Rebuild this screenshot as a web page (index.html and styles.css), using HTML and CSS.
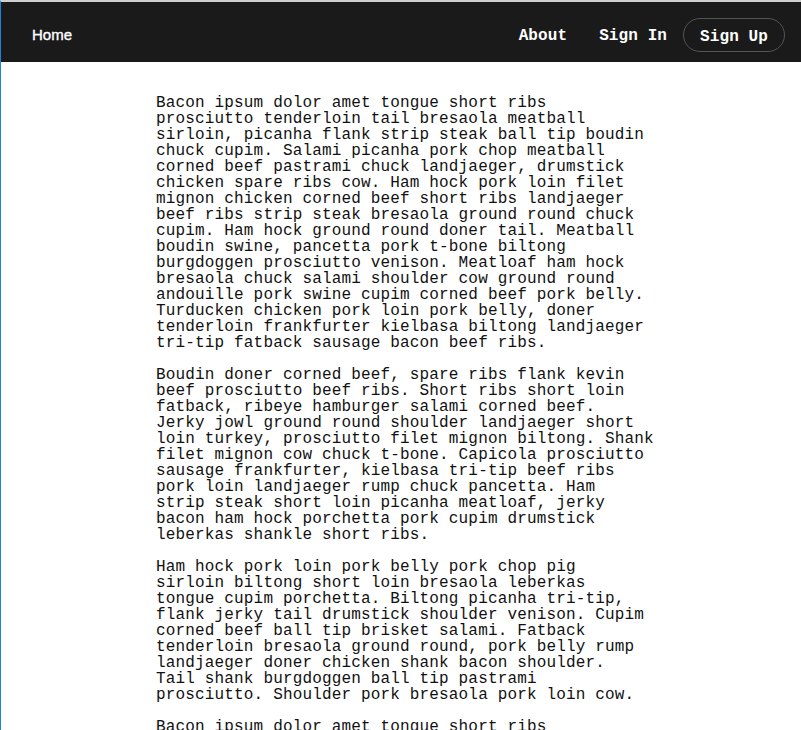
FILE: index.html
```html
<!DOCTYPE html>
<html>
<head>
<meta charset="utf-8">
<link rel="stylesheet" href="styles.css">
</head>
<body>
<div class="frame">
  <nav class="nav">
    <a class="home" href="#">Home</a>
    <div class="links">
      <a class="link" href="#">About</a>
      <a class="link" href="#">Sign In</a>
      <a class="btn" href="#">Sign Up</a>
    </div>
  </nav>
  <main class="main">
    <p>Bacon ipsum dolor amet tongue short ribs<br>
prosciutto tenderloin tail bresaola meatball<br>
sirloin, picanha flank strip steak ball tip boudin<br>
chuck cupim. Salami picanha pork chop meatball<br>
corned beef pastrami chuck landjaeger, drumstick<br>
chicken spare ribs cow. Ham hock pork loin filet<br>
mignon chicken corned beef short ribs landjaeger<br>
beef ribs strip steak bresaola ground round chuck<br>
cupim. Ham hock ground round doner tail. Meatball<br>
boudin swine, pancetta pork t-bone biltong<br>
burgdoggen prosciutto venison. Meatloaf ham hock<br>
bresaola chuck salami shoulder cow ground round<br>
andouille pork swine cupim corned beef pork belly.<br>
Turducken chicken pork loin pork belly, doner<br>
tenderloin frankfurter kielbasa biltong landjaeger<br>
tri-tip fatback sausage bacon beef ribs.</p>
    <p>Boudin doner corned beef, spare ribs flank kevin<br>
beef prosciutto beef ribs. Short ribs short loin<br>
fatback, ribeye hamburger salami corned beef.<br>
Jerky jowl ground round shoulder landjaeger short<br>
loin turkey, prosciutto filet mignon biltong. Shank<br>
filet mignon cow chuck t-bone. Capicola prosciutto<br>
sausage frankfurter, kielbasa tri-tip beef ribs<br>
pork loin landjaeger rump chuck pancetta. Ham<br>
strip steak short loin picanha meatloaf, jerky<br>
bacon ham hock porchetta pork cupim drumstick<br>
leberkas shankle short ribs.</p>
    <p>Ham hock pork loin pork belly pork chop pig<br>
sirloin biltong short loin bresaola leberkas<br>
tongue cupim porchetta. Biltong picanha tri-tip,<br>
flank jerky tail drumstick shoulder venison. Cupim<br>
corned beef ball tip brisket salami. Fatback<br>
tenderloin bresaola ground round, pork belly rump<br>
landjaeger doner chicken shank bacon shoulder.<br>
Tail shank burgdoggen ball tip pastrami<br>
prosciutto. Shoulder pork bresaola pork loin cow.</p>
    <p>Bacon ipsum dolor amet tongue short ribs</p>
  </main>
</div>
</body>
</html>
```
FILE: styles.css
```css
html, body {
  margin: 0;
  padding: 0;
  background: #ffffff;
}
body {
  overflow: hidden;
  height: 730px;
}
.frame {
  border-top: 2px solid #cfcfcf;
  border-left: 1px solid #1a84e0;
  height: 730px;
  box-sizing: border-box;
  overflow: hidden;
}
.nav {
  height: 60px;
  box-sizing: border-box;
  background: #1a1a1a;
  display: flex;
  align-items: center;
  justify-content: space-between;
  padding: 5px 16px 0 31px;
}
.home {
  font-family: "Liberation Sans", Arial, sans-serif;
  font-size: 15px;
  color: #ffffff;
  text-decoration: none;
  -webkit-text-stroke: 0.35px #ffffff;
}
.links {
  display: flex;
  align-items: center;
}
.link, .btn {
  font-family: "Liberation Mono", "DejaVu Sans Mono", monospace;
  font-size: 16px;
  line-height: 16px;
  letter-spacing: 0.1px;
  color: #ffffff;
  text-decoration: none;
  font-weight: bold;
}
.link {
  padding: 3px 16px 0;
}
.btn {
  padding: 10px 16px 6px;
  border: 1px solid #555555;
  border-radius: 999px;
}
.main {
  width: 490px;
  margin: 0 auto;
  padding-top: 33px;
  font-family: "Liberation Mono", "DejaVu Sans Mono", monospace;
  font-size: 16px;
  line-height: 16px;
  letter-spacing: 0.16px;
  color: #111111;
}
.main p {
  margin: 0 0 16px;
  white-space: nowrap;
}
```
